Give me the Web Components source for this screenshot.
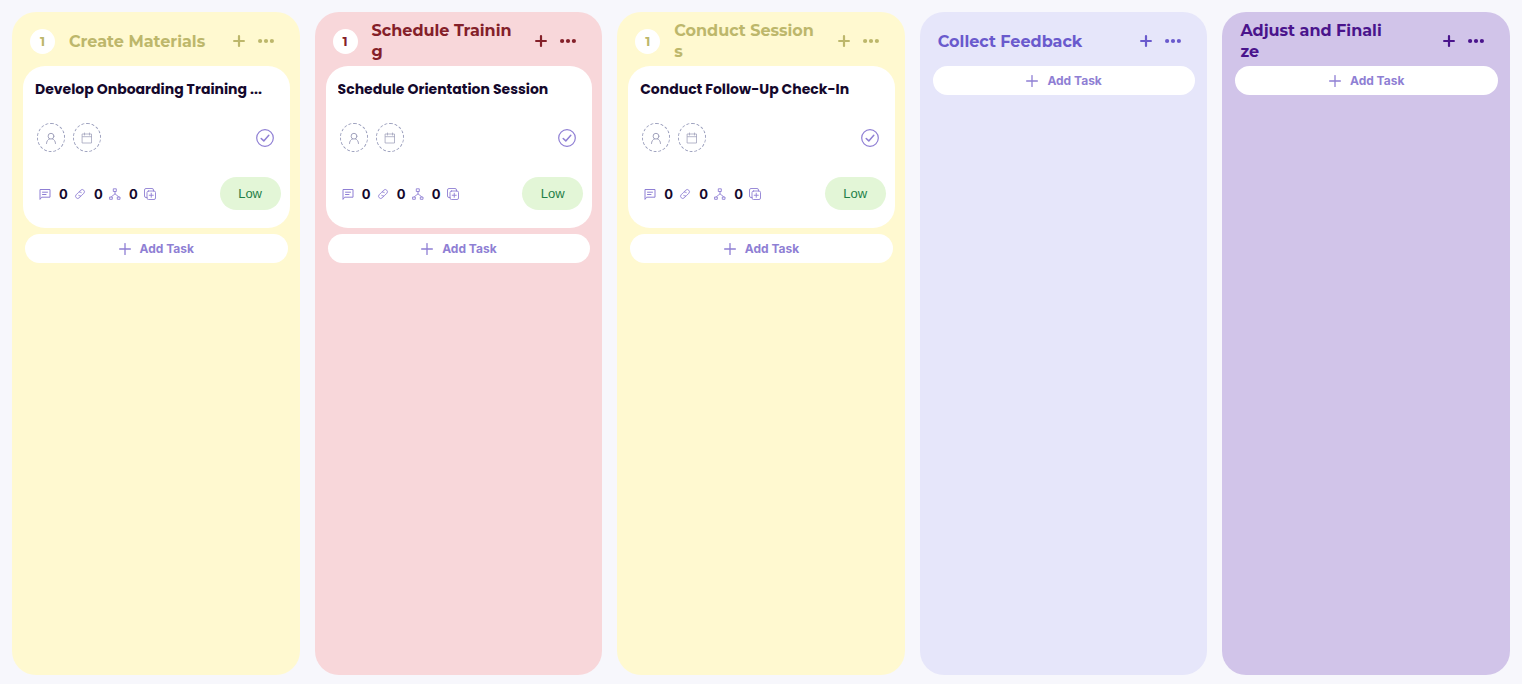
<!DOCTYPE html>
<html lang="en">
<head>
<meta charset="utf-8">
<meta name="viewport" content="width=device-width, initial-scale=1">
<title>Onboarding board</title>
<style>
  body { margin: 0; background: #f7f7fc; font-family: Montserrat, Inter, sans-serif; }
</style>
</head>
<body>
<kanban-board>
  <kanban-column heading="Create Materials" count="1" theme="khaki">
    <task-card priority="Low">Develop Onboarding Training ...</task-card>
  </kanban-column>
  <kanban-column heading="Schedule Training" count="1" theme="rose">
    <task-card priority="Low">Schedule Orientation Session</task-card>
  </kanban-column>
  <kanban-column heading="Conduct Sessions" count="1" theme="khaki">
    <task-card priority="Low">Conduct Follow-Up Check-In</task-card>
  </kanban-column>
  <kanban-column heading="Collect Feedback" theme="lavender"></kanban-column>
  <kanban-column heading="Adjust and Finalize" theme="violet"></kanban-column>
</kanban-board>

<script>
const ICONS = {
  plusBold: ['0 0 12 12', '<path d="M6 1.100v9.800M1.100 6h9.800" stroke-width="2.200"/>'],
  plus: ['0 0 12 12', '<path d="M6 .6v10.800M.6 6h10.800" stroke-width="1.300"/>'],
  dots: ['0 0 16 6', '<g fill="currentColor" stroke="none"><circle cx="2.100" cy="3" r="2.100"/><circle cx="8" cy="3" r="2.100"/><circle cx="13.900" cy="3" r="2.100"/></g>'],
  person: ['0 0 12 12', '<circle cx="6" cy="4.200" r="2.900"/><path d="M1.500 11.500C1.500 9.300 2.800 7.400 4.700 6.800M10.500 11.500C10.500 9.300 9.200 7.400 7.300 6.800"/>'],
  calendar: ['0 0 12 12', '<path d="M1.500 2h9v9h-9zM1.500 4.700h9M3.500 1v2M8.500 1v2" stroke-width=".8"/>'],
  check: ['0 0 18 18', '<circle cx="9" cy="9" r="8.300" stroke-width="1.200"/><path d="M5.200 9.500l2.600 2.400 5-5.600" stroke-width="1.500"/>'],
  comment: ['0 0 12 12', '<path d="M1 11V1.500h10v7.700H3zM3.500 4.200h5M3.500 6.500h3.500"/>'],
  link: ['0 0 12 12', '<path d="M5.200 3.700l1.600-1.600a2.200 2.200 0 0 1 3.100 3.100L7.600 7.500a2.100 2.100 0 0 1-2.900 0M6.800 8.300l-1.600 1.600a2.200 2.200 0 0 1-3.100-3.100l2.300-2.300a2.100 2.100 0 0 1 2.900 0" stroke-width=".9"/>'],
  tree: ['0 0 12 12', '<path d="M4.700.8h2.600v2.700H4.700zM1 9h2.300v2.300H1zM8.700 9H11v2.300H8.700zM6 3.500v2.300M2.200 9C2.700 7.800 4.500 7.400 6 5.800C7.500 7.400 9.300 7.800 9.800 9" stroke-width=".9"/>'],
  copy: ['0 0 12 12', '<g stroke-width=".9"><rect x="3" y="3" width="8.500" height="8.500" rx="1.500"/><path d="M3 9.500H2A1.500 1.500 0 0 1 .5 8V2A1.500 1.500 0 0 1 2 .5h6A1.500 1.500 0 0 1 9.500 2v1M7.250 5.200v4.100M5.200 7.250h4.100"/></g>']
};

const RESET = `
  *, *::before, *::after { box-sizing: border-box; }
  button { margin: 0; padding: 0; border: 0; background: none; font: inherit; color: inherit; cursor: pointer; }
`;

class BaseElement extends HTMLElement {
  connectedCallback() {
    if (this.shadowRoot) return;
    this.attachShadow({ mode: 'open' }).innerHTML = `<style>${RESET}${this.styles()}</style>${this.markup()}`;
  }
}

customElements.define('line-icon', class extends BaseElement {
  styles() {
    return `
      :host { display: block; flex: none; width: 12px; height: 12px; }
      svg { display: block; width: 100%; height: 100%; fill: none; stroke: currentColor; stroke-linecap: round; stroke-linejoin: round; }
    `;
  }
  markup() {
    const [box, shape] = ICONS[this.getAttribute('name')];
    return `<svg viewBox="${box}" aria-hidden="true">${shape}</svg>`;
  }
});

customElements.define('kanban-board', class extends BaseElement {
  styles() {
    return `
      :host {
        display: grid; grid-auto-flow: column; grid-auto-columns: minmax(0, 1fr); gap: 15px;
        box-sizing: border-box; min-height: 100vh; padding: 12px 12px 9px;
      }
    `;
  }
  markup() { return '<slot></slot>'; }
});

customElements.define('add-task', class extends BaseElement {
  styles() {
    return `
      :host { display: block; margin: 0 2px; }
      button {
        display: flex; align-items: center; justify-content: center; gap: 9px;
        width: 100%; height: 29px; border-radius: 15px; background: #fff;
        color: #8f7fd4; font: 700 12px/20px Inter, sans-serif;
      }
    `;
  }
  markup() { return '<button type="button"><line-icon name="plus"></line-icon>Add Task</button>'; }
});

customElements.define('kanban-column', class extends BaseElement {
  styles() {
    return `
      :host {
        display: flex; flex-direction: column; box-sizing: border-box; min-width: 0;
        padding: 0 10px 12px 11px; border-radius: 24px; background: var(--surface); --surface: #fff9d0; --ink: #bdb76b;
      }
      :host([theme="rose"]) { --surface: #f8d7da; --ink: #842029; }
      :host([theme="lavender"]) { --surface: #e6e6fa; --ink: #6a5acd; }
      :host([theme="violet"]) { --surface: #d1c4e9; --ink: #4a148c; }
      header { display: flex; align-items: center; height: 54px; padding: 8px 16px 4px 7px; color: var(--ink); }
      .count {
        display: grid; place-items: center; flex: none; width: 25px; height: 25px; margin-right: 14px;
        border-radius: 50%; background: #fff; font: 700 13px/20px Montserrat, Inter, sans-serif;
      }
      h2 { flex: 0 1 146px; min-width: 0; margin: 0; font: 700 16px/21px Montserrat, Inter, sans-serif; word-break: break-all; }
      .actions { display: flex; align-items: center; gap: 13px; margin-left: auto; }
      .more { width: 16px; height: 6px; }
    `;
  }
  markup() {
    const count = this.getAttribute('count');
    return `
      <header>
        ${count ? `<span class="count">${count}</span>` : ''}
        <h2>${this.getAttribute('heading')}</h2>
        <div class="actions">
          <button type="button" aria-label="Add"><line-icon name="plusBold"></line-icon></button>
          <button type="button" aria-label="More"><line-icon class="more" name="dots"></line-icon></button>
        </div>
      </header>
      <slot></slot>
      <add-task></add-task>
    `;
  }
});

customElements.define('task-card', class extends BaseElement {
  styles() {
    return `
      :host {
        display: block; box-sizing: border-box; height: 162px; margin-bottom: 6px;
        padding: 12px 9px 0 12px; border-radius: 22px; background: #fff; color: #8f7fd4;
      }
      h3 { margin: 0; color: #14082c; font: 700 14px/22px Poppins, Inter, sans-serif; white-space: nowrap; overflow: hidden; }
      .row { display: flex; align-items: center; }
      .people { gap: 8px; margin-top: 23px; padding: 0 7px 0 2px; }
      .slot-button { display: grid; place-items: center; width: 28px; height: 29px; border: 1px dashed #9a9ebc; border-radius: 50%; color: #a2a3bd; }
      .done { margin-left: auto; }
      .done line-icon { width: 18px; height: 18px; }
      .meta { gap: 6px; margin-top: 25px; padding-left: 4px; }
      .stat { display: flex; align-items: center; gap: 8px; color: inherit; }
      .stat b { color: #14082c; width: 9px; font: 700 13px/20px Inter, sans-serif; }
      .priority {
        width: 61px; height: 33px; margin-left: auto; border-radius: 17px; background: #e3f6d7;
        color: #1f8048; font: 400 13px/20px "Liberation Sans", sans-serif;
      }
    `;
  }
  markup() {
    const stat = (icon, label) =>
      `<button type="button" class="stat" aria-label="${label}"><line-icon name="${icon}"></line-icon><b>0</b></button>`;
    return `
      <h3><slot></slot></h3>
      <div class="row people">
        <button type="button" class="slot-button" aria-label="Assign"><line-icon name="person"></line-icon></button>
        <button type="button" class="slot-button" aria-label="Due date"><line-icon name="calendar"></line-icon></button>
        <button type="button" class="done" aria-label="Mark complete"><line-icon name="check"></line-icon></button>
      </div>
      <div class="row meta">
        ${stat('comment', 'Comments')}${stat('link', 'Links')}${stat('tree', 'Subtasks')}
        <button type="button" aria-label="Duplicate"><line-icon name="copy"></line-icon></button>
        <button type="button" class="priority">${this.getAttribute('priority')}</button>
      </div>
    `;
  }
});
</script>
</body>
</html>
